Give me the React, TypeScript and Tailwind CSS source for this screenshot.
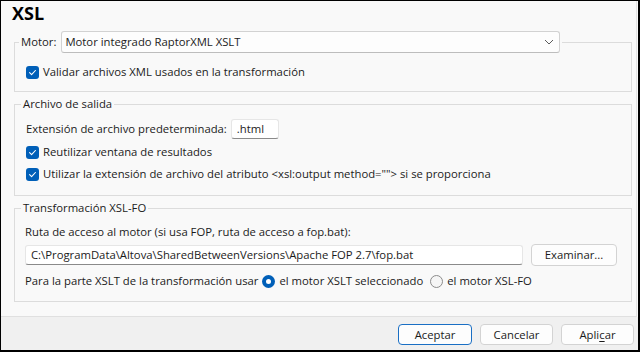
import React from "react";

function CheckBox({ label }: { label: string }) {
  return (
    <div className="flex items-center h-[16px] gap-[4px]">
      <span className="w-[13px] h-[13px] rounded-[3px] bg-[#005fb8] flex items-center justify-center shrink-0">
        <svg width="9" height="9" viewBox="0 0 9 9">
          <path d="M1.6 4.7 L3.6 6.6 L7.4 2.5" stroke="white" strokeWidth="1.1" fill="none" strokeLinecap="round" strokeLinejoin="round" />
        </svg>
      </span>
      <span className="whitespace-nowrap">{label}</span>
    </div>
  );
}

function Radio({ checked, label }: { checked?: boolean; label: string }) {
  return (
    <div className="flex items-center gap-[4px]">
      {checked ? (
        <span className="w-[13px] h-[13px] rounded-full bg-[#005fb8] flex items-center justify-center">
          <span className="w-[5px] h-[5px] rounded-full bg-white" />
        </span>
      ) : (
        <span className="w-[13px] h-[13px] rounded-full border border-[#8c8c8c] bg-[#f5f5f5]" />
      )}
      <span className="whitespace-nowrap">{label}</span>
    </div>
  );
}

function Button({ children, primary, width }: { children: React.ReactNode; primary?: boolean; width: string }) {
  return (
    <div
      className={`${width} h-[21px] rounded-[4px] bg-[#fdfdfd] flex items-center justify-center border ${
        primary ? "border-[#1a6fc4]" : "border-[#d3d3d3]"
      }`}
    >
      {children}
    </div>
  );
}

export default function App() {
  return (
    <div className="w-[640px] h-[352px] border-t border-l border-r-2 border-b-2 border-black bg-[#f9f9f9] flex flex-col text-[11.3px] leading-[16px] text-[#1b1b1b] font-['Segoe_UI','Open_Sans',sans-serif]">
      {/* Main panel */}
      <div className="h-[316px] mr-[1px] border-r border-b border-r-[#e3e3e3] border-b-[#e0e0e0] pl-[13px] pr-[4px]">
        <div className="h-[24px] ml-[-2px] text-[18px] leading-[24px] font-bold text-black">XSL</div>

        {/* Motor */}
        <fieldset className="mt-[6px] border border-[#dcdcdc] pt-[11px] pb-[11px]">
          <legend className="ml-[4px] px-[2px]">
            <div className="flex items-center gap-[5px]">
              <span>Motor:</span>
              <div className="w-[499px] h-[22px] bg-[#fdfdfd] border border-[#d2d2d2] border-b-[#bdbdbd] rounded-[3px] flex items-center justify-between pl-[3px] pr-[5px]">
                <span>Motor integrado RaptorXML XSLT</span>
                <svg width="10" height="6" viewBox="0 0 10 6">
                  <path d="M1 1 L5 5 L9 1" stroke="#5c5c5c" strokeWidth="1" fill="none" />
                </svg>
              </div>
            </div>
          </legend>
          <div className="pl-[11px]">
            <CheckBox label="Validar archivos XML usados en la transformación" />
          </div>
        </fieldset>

        {/* Archivo de salida */}
        <fieldset className="mt-[4px] border border-[#dcdcdc] pt-[7px] pb-[13px]">
          <legend className="ml-[6px] px-[2px]">Archivo de salida</legend>
          <div className="pl-[11px] flex flex-col">
            <div className="flex items-center h-[20px] gap-[4px]">
              <span>Extensión de archivo predeterminada:</span>
              <div className="w-[48px] h-[20px] bg-white border border-[#e6e6e6] border-b-[#8a8a8a] rounded-[3px] flex items-center pl-[5px]">
                .html
              </div>
            </div>
            <div className="mt-[5px]">
              <CheckBox label="Reutilizar ventana de resultados" />
            </div>
            <div className="mt-[6px]">
              <CheckBox label={'Utilizar la extensión de archivo del atributo <xsl:output method=""> si se proporciona'} />
            </div>
          </div>
        </fieldset>

        {/* Transformación XSL-FO */}
        <fieldset className="mt-[4px] border border-[#dcdcdc] pt-[8px] pb-[12px]">
          <legend className="ml-[6px] px-[2px]">Transformación XSL-FO</legend>
          <div className="pl-[10px] pr-[13px] flex flex-col">
            <div className="h-[16px]">Ruta de acceso al motor (si usa FOP, ruta de acceso a fop.bat):</div>
            <div className="mt-[4px] flex items-center gap-[8px] h-[22px]">
              <div className="w-[498px] h-[20px] bg-white border border-[#e6e6e6] border-b-[#8a8a8a] rounded-[3px] flex items-center pl-[5px] whitespace-nowrap">
                C:\ProgramData\Altova\SharedBetweenVersions\Apache FOP 2.7\fop.bat
              </div>
              <div className="w-[86px] h-[22px] rounded-[4px] bg-[#fdfdfd] border border-[#d3d3d3] flex items-center justify-center">
                Examinar...
              </div>
            </div>
            <div className="mt-[7px] h-[16px] flex items-center gap-[4px]">
              <span>Para la parte XSLT de la transformación usar</span>
              <Radio checked label="el motor XSLT seleccionado" />
              <div className="ml-[3px]">
                <Radio label="el motor XSL-FO" />
              </div>
            </div>
          </div>
        </fieldset>
      </div>

      {/* Footer */}
      <div className="flex-1 bg-[#f0f0f0] flex justify-end items-start pt-[7px] pr-[4px] gap-[8px]">
        <Button primary width="w-[74px]">Aceptar</Button>
        <Button width="w-[73px]">Cancelar</Button>
        <Button width="w-[73px]">
          <span>
            Apli<span className="underline underline-offset-2">c</span>ar
          </span>
        </Button>
      </div>
    </div>
  );
}
